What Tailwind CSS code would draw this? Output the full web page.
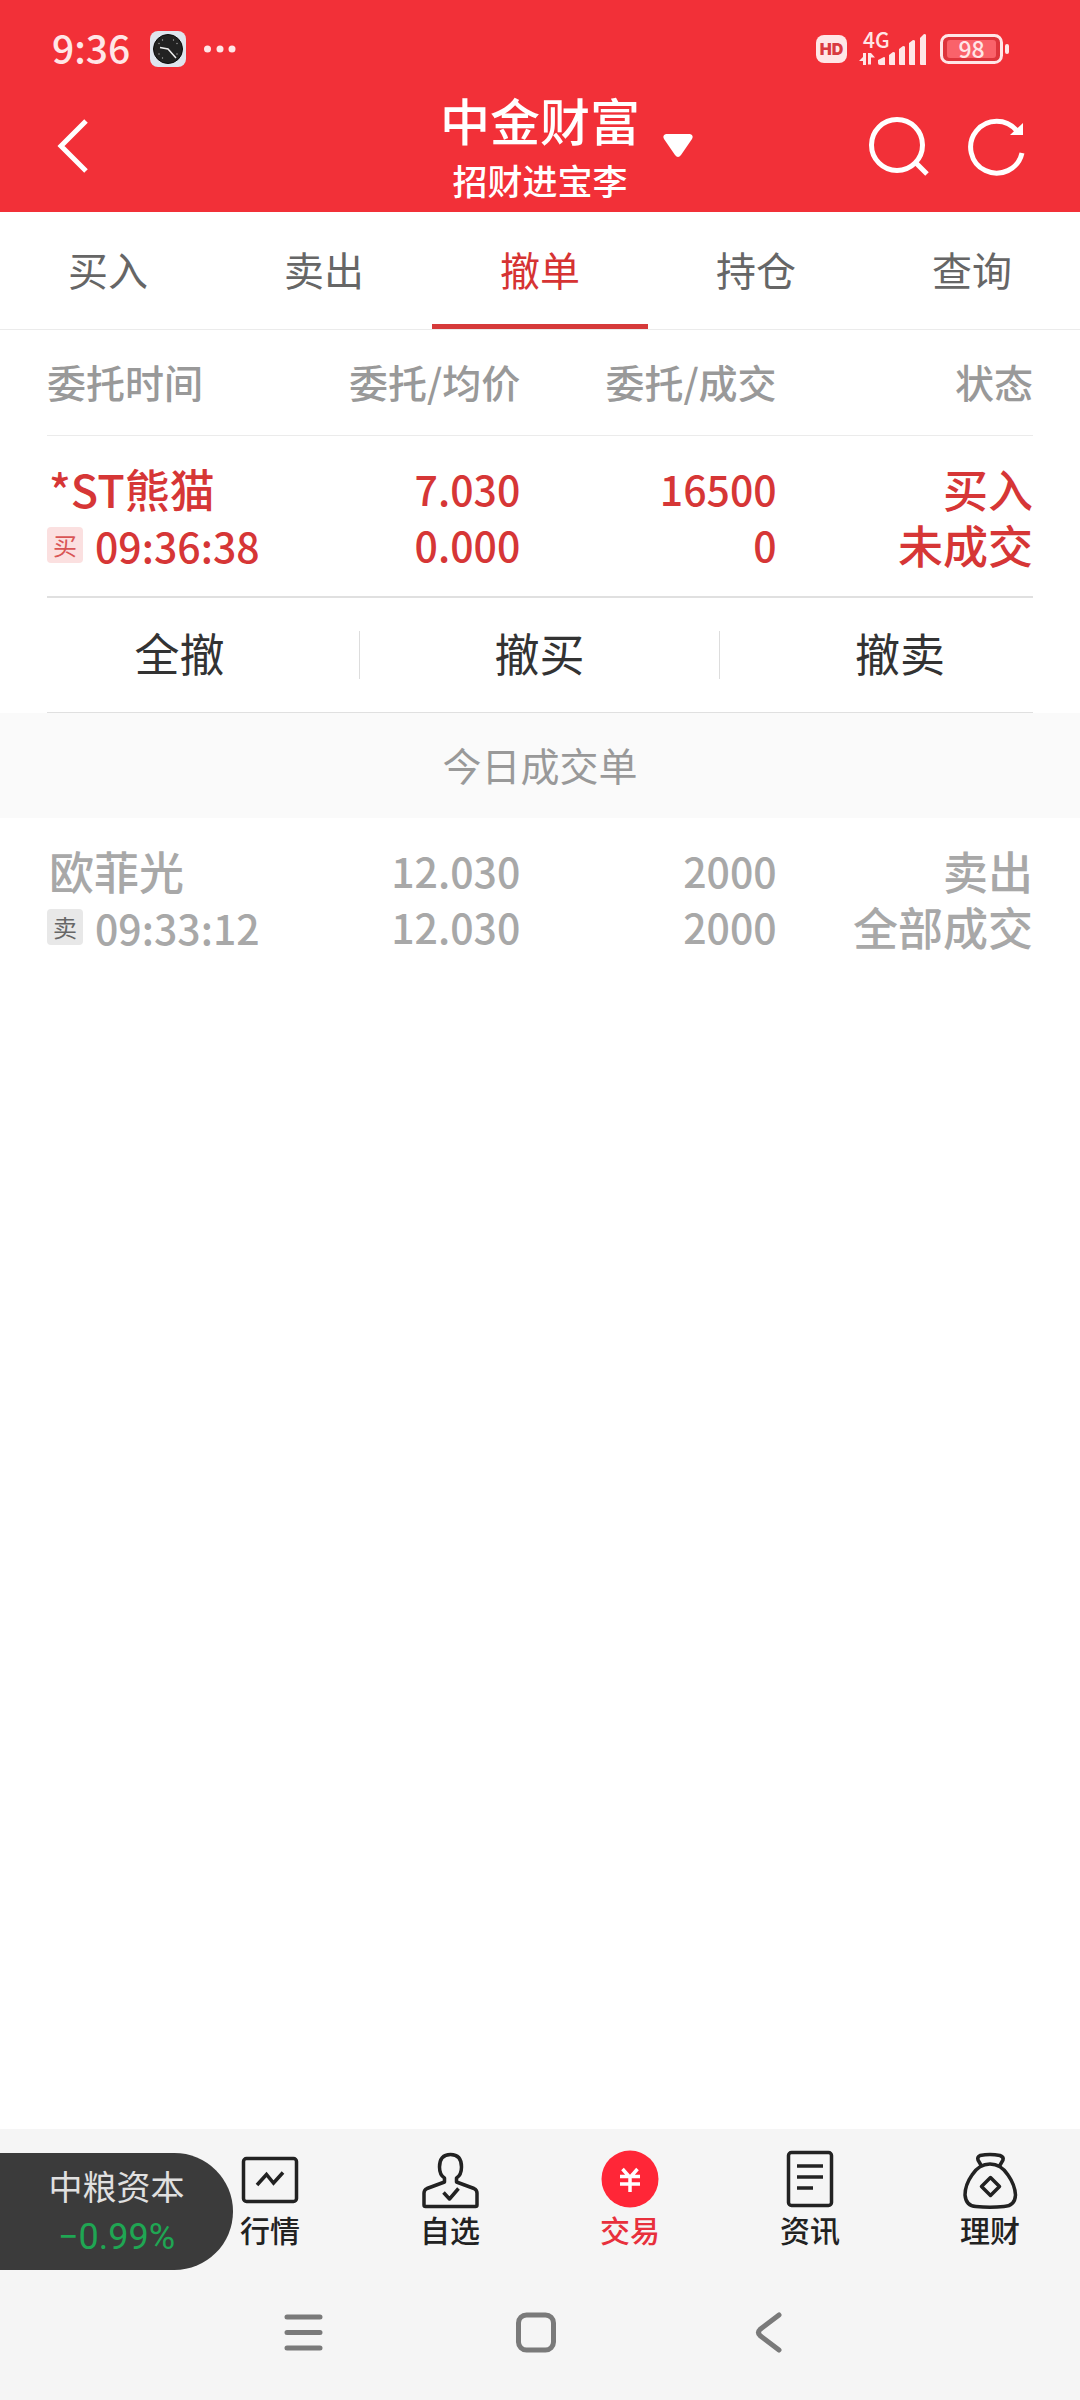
<!DOCTYPE html>
<html lang="zh-CN">
<head>
    <meta charset="UTF-8">
    <meta name="viewport" content="width=device-width, initial-scale=1.0">
    <title>中金财富 | 撤单</title>
    <script src="https://cdn.jsdelivr.net/npm/@tailwindcss/browser@4"></script>
</head>
<body class="min-h-screen flex flex-col bg-white font-['Noto_Sans_CJK_SC',sans-serif]">

    <header class="bg-[#f23038] text-white h-[212px] flex flex-col">
        <!-- Status bar -->
        <div class="h-[94px] pt-1 flex items-center justify-between pl-[52px] pr-[71px] text-[#ffe6e7]">
            <div class="flex items-center">
                <span class="text-[39px] leading-none font-medium pb-1">9:36</span>
                <svg class="w-9 h-9 ml-5" viewBox="0 0 36 36">
                    <rect width="36" height="36" rx="8" fill="#dfe5ee"/>
                    <circle cx="18" cy="18" r="14.5" fill="#222" stroke="#0b0b0b"/>
                    <path d="M10 16.5L18 18L26 27" fill="none" stroke="#eee" stroke-width="1.5"/>
                    <g fill="#aaa"><circle cx="9" cy="12.500" r=".7"/><circle cx="12.500" cy="9" r=".7"/><circle cx="23.500" cy="9" r=".7"/><circle cx="27" cy="12.500" r=".7"/><circle cx="27" cy="23" r=".7"/><circle cx="9" cy="23" r=".7"/><circle cx="12.500" cy="27" r=".7"/></g>
                </svg>
                <svg class="w-8 h-2 ml-[18px]" viewBox="0 0 32 8" fill="#ffe6e7">
                    <circle cx="3.500" cy="4" r="3.500"/><circle cx="16" cy="4" r="3.500"/><circle cx="28" cy="4" r="3.500"/>
                </svg>
            </div>
            <div class="flex items-center">
                <span class="w-[31px] h-7 rounded-lg bg-[#ffe6e7] text-[#d93a40] font-[Inter,sans-serif] font-black text-base leading-7 text-center">HD</span>
                <div class="relative w-[68px] h-8 ml-3">
                    <span class="absolute left-1 top-0 text-[21px] leading-3 font-medium">4G</span>
                    <svg class="w-full h-full" viewBox="0 0 68 32" fill="#ffe6e7">
                        <path d="M4 20h3v12h-3v-4h-4l4-4zM9 20h3l4 4.500h-4v7h-3z"/>
                        <path d="M19 27l6-3q1 0 1 1v7h-5q-2 0-2-2zM30 22l4-3q2 0 2 1v12h-5q-1 0-1-1zM40 16l4-3q2 0 2 1v18h-5q-1 0-1-1zM50 10l4-3q2 0 2 1v24h-5q-1 0-1-1zM61 5l4-4q2 0 2 1v30h-5q-1 0-1-1z"/>
                    </svg>
                </div>
                <div class="relative ml-[13px] w-[69px] h-[30px]">
                    <svg class="w-full h-full" viewBox="0 0 69 30">
                        <rect x="1.500" y="1.500" width="60" height="27" rx="7" fill="#dd343c" stroke="#ffe6e7" stroke-width="3"/>
                        <rect x="7" y="6" width="49" height="18" rx="3" fill="#fa626a"/>
                        <rect x="65" y="10" width="4" height="10" rx="2" fill="#ffe6e7"/>
                    </svg>
                    <span class="absolute left-0 top-0 w-[63px] text-center text-[23px] leading-[28px] font-medium">98</span>
                </div>
            </div>
        </div>

        <!-- Title bar -->
        <div class="flex-1 grid grid-cols-[1fr_auto_1fr] px-[52px]">
            <button class="justify-self-start w-12 h-[103px] flex items-center" aria-label="返回">
                <svg class="w-12 h-14" viewBox="0 0 48 56" fill="none" stroke="white" stroke-width="5">
                    <path d="M34 3L9 28L34 53"/>
                </svg>
            </button>
            <button class="relative self-start text-center">
                <span class="block text-[50px] leading-[50px] font-medium">中金财富</span>
                <span class="block text-[35px] leading-[35px] font-medium mt-[18px]">招财进宝李</span>
                <svg class="absolute left-[223px] top-10 w-[30px] h-6" viewBox="0 0 30 24" fill="white">
                    <path d="M3 0h24q4 1 2 5L18 21q-3 4-6 0L1 5q-2-4 2-5z"/>
                </svg>
            </button>
            <div class="justify-self-end flex items-center gap-[34px] h-[103px]">
                <button aria-label="搜索">
                    <svg class="w-16 h-16" viewBox="0 0 64 64" fill="none" stroke="white" stroke-width="5">
                        <circle cx="31" cy="31" r="25.500"/><path d="M49 48L61 60"/>
                    </svg>
                </button>
                <button aria-label="刷新">
                    <svg class="w-16 h-16" viewBox="0 0 64 64" fill="none" stroke="white" stroke-width="5">
                        <path d="M58 39A26 26 0 1 1 53 17"/><path d="M59 9v12h-13z" fill="white" stroke="none"/>
                    </svg>
                </button>
            </div>
        </div>
    </header>

    <!-- Tabs -->
    <nav class="grid grid-cols-5 border-b border-[#ebebeb] text-[40px] leading-[58px] text-[#666] text-center">
        <a href="#" class="pt-7 pb-[26px] border-b-5 border-transparent">买入</a>
        <a href="#" class="pt-7 pb-[26px] border-b-5 border-transparent">卖出</a>
        <a href="#" class="pt-7 pb-[26px] border-b-5 border-[#d63a3a] text-[#d63333]">撤单</a>
        <a href="#" class="pt-7 pb-[26px] border-b-5 border-transparent">持仓</a>
        <a href="#" class="pt-7 pb-[26px] border-b-5 border-transparent">查询</a>
    </nav>

    <main class="flex-1">
        <!-- Open orders -->
        <div class="px-[47px]">
            <table class="w-full table-fixed text-right border-b-2 border-[#e0e0e0]">
                <thead>
                    <tr class="border-b border-[#ebebeb] text-[39px] text-[#999] leading-[57px]">
                        <th class="w-[22%] pt-[23px] pb-[25px] font-medium text-left">委托时间</th>
                        <th class="w-[26%] pt-[23px] pb-[25px] font-medium">委托/均价</th>
                        <th class="w-[26%] pt-[23px] pb-[25px] font-medium">委托/成交</th>
                        <th class="w-[26%] pt-[23px] pb-[25px] font-medium">状态</th>
                    </tr>
                </thead>
                <tbody>
                    <tr class="text-[45px] leading-[56px] text-[#d63636] font-medium">
                        <td class="pt-[25px] pb-[23px] text-left whitespace-nowrap">
                            <div class="pl-0.5">*ST熊猫</div>
                            <div class="flex items-center">
                                <span class="w-9 h-9 rounded bg-[#fbe0e0] text-[#d95555] text-2xl leading-9 text-center font-normal">买</span>
                                <span class="ml-3 text-[41px]">09:36:38</span>
                            </div>
                        </td>
                        <td class="pt-6 pb-6 text-[41px]">
                            <div>7.030</div>
                            <div>0.000</div>
                        </td>
                        <td class="pt-6 pb-6 text-[41px]">
                            <div>16500</div>
                            <div>0</div>
                        </td>
                        <td class="pt-[25px] pb-[23px]">
                            <div>买入</div>
                            <div>未成交</div>
                        </td>
                    </tr>
                </tbody>
            </table>
        </div>

        <!-- Cancel actions -->
        <div class="grid grid-cols-3 items-center h-[114px] text-[45px] text-[#333]">
            <button class="h-12 pb-1 leading-[44px] border-r border-[#ddd]">全撤</button>
            <button class="h-12 pb-1 leading-[44px] border-r border-[#ddd]">撤买</button>
            <button class="h-12 pb-1 leading-[44px]">撤卖</button>
        </div>
        <hr class="mx-[47px] border-[#e0e0e0]">

        <!-- Filled today -->
        <h2 class="bg-[#fafafa] h-[105px] leading-[103px] text-center text-[39px] text-[#999]">今日成交单</h2>
        <div class="px-[47px]">
            <table class="w-full table-fixed text-right">
                <tbody>
                    <tr class="text-[45px] leading-[56px] text-[#a8a8a8] font-medium">
                        <td class="w-[22%] pt-[25px] pb-[23px] text-left whitespace-nowrap">
                            <div class="pl-0.5">欧菲光</div>
                            <div class="flex items-center">
                                <span class="w-9 h-9 rounded bg-[#e8e8e8] text-[#666] text-2xl leading-9 text-center font-normal">卖</span>
                                <span class="ml-3 text-[41px]">09:33:12</span>
                            </div>
                        </td>
                        <td class="w-[26%] pt-6 pb-6 text-[41px]">
                            <div>12.030</div>
                            <div>12.030</div>
                        </td>
                        <td class="w-[26%] pt-6 pb-6 text-[41px]">
                            <div>2000</div>
                            <div>2000</div>
                        </td>
                        <td class="w-[26%] pt-[25px] pb-[23px]">
                            <div>卖出</div>
                            <div>全部成交</div>
                        </td>
                    </tr>
                </tbody>
            </table>
        </div>
    </main>

    <footer class="bg-[#f5f5f5]">
        <!-- Bottom navigation -->
        <nav class="relative grid grid-cols-6 pt-5 h-[156px] text-[30px] leading-[40px] font-medium text-[#222]">
            <a href="#" class="col-start-2 flex flex-col items-center">
                <svg class="w-[60px] h-[60px]" viewBox="0 0 60 60" fill="none" stroke="#222" stroke-width="3.500">
                    <rect x="3.500" y="9.500" width="53" height="43" rx="3"/><path d="M17 36L26.500 25.500L33.500 34L43 23.500"/>
                </svg>
                <span>行情</span>
            </a>
            <a href="#" class="flex flex-col items-center">
                <svg class="w-[60px] h-[60px]" viewBox="0 0 60 60" fill="none" stroke="#222" stroke-width="3.500" stroke-linejoin="round">
                    <path d="M24.500 33v-4Q19.500 26 19.500 18Q19.500 5.500 30.500 5.500Q41.500 5.500 41.500 18Q41.500 26 36.500 29v4L54 39.500Q57 41 57 44v12q0 1.500-1.500 1.500h-50Q4 57.500 4 56v-12Q4 41 7 39.500z"/>
                    <path d="M23.500 43.500L29.500 50L38.500 39.500"/>
                </svg>
                <span>自选</span>
            </a>
            <a href="#" class="flex flex-col items-center text-[#e8303c]">
                <svg class="w-[60px] h-[60px]" viewBox="0 0 60 60" fill="none" stroke="white" stroke-width="3.500">
                    <circle cx="30" cy="30" r="28.500" fill="#ff2637" stroke="none"/>
                    <path d="M22.500 20L30 28.500L37.500 20M20 27.500h20M20 35h20M30 27v16"/>
                </svg>
                <span>交易</span>
            </a>
            <a href="#" class="flex flex-col items-center">
                <svg class="w-[60px] h-[60px]" viewBox="0 0 60 60" fill="none" stroke="#222" stroke-width="3.500">
                    <rect x="8.500" y="3.500" width="43" height="53" rx="3"/><path d="M17 17h26M17 28h26M17 39h16"/>
                </svg>
                <span>资讯</span>
            </a>
            <a href="#" class="flex flex-col items-center">
                <svg class="w-[60px] h-[60px]" viewBox="0 0 60 60" fill="none" stroke="#222" stroke-width="3.500" stroke-linejoin="round">
                    <path d="M21.500 17L18 11q-1-3 2-4.500q10-2 20 0q4 1.500 3 4.500l-3.500 6"/>
                    <path d="M30 15Q19 15 12 26Q5 36 5 46Q6 57 16 57.500Q30 59 44 57.500Q55 57 55.500 46Q55 36 48 26Q41 15 30 15z"/>
                    <path d="M30.500 28.500l9 9l-9 9l-9-9z"/>
                </svg>
                <span>理财</span>
            </a>

            <!-- Floating quote -->
            <a href="#" class="absolute left-0 top-6 w-[233px] h-[117px] rounded-r-full bg-[#3b3b3b] pt-2 text-center font-normal">
                <span class="block text-[34px] leading-[50px] text-[#e0e0e0]">中粮资本</span>
                <span class="block text-[36px] leading-[52px] text-[#1fa653] font-[Roboto,sans-serif]">−0.99%</span>
            </a>
        </nav>

        <!-- System keys -->
        <div class="grid grid-cols-3 justify-items-center pt-6 pb-[44px] pl-[186px] pr-[194px]">
            <button aria-label="菜单">
                <svg class="w-12 h-[47px]" viewBox="0 0 48 47" fill="none" stroke="#7a7a7a" stroke-width="5" stroke-linecap="round">
                    <path d="M8 8h33M8 23.500h33M8 39h33"/>
                </svg>
            </button>
            <button aria-label="主屏幕">
                <svg class="w-12 h-[47px]" viewBox="0 0 48 47" fill="none" stroke="#7a7a7a" stroke-width="5">
                    <rect x="6.500" y="6" width="35" height="35" rx="8"/>
                </svg>
            </button>
            <button aria-label="后退">
                <svg class="w-12 h-[47px]" viewBox="0 0 48 47" fill="none" stroke="#7a7a7a" stroke-width="5" stroke-linecap="round">
                    <path d="M34 6L15 20.500q-3 3 0 6L34 41"/>
                </svg>
            </button>
        </div>
    </footer>
</body>
</html>
